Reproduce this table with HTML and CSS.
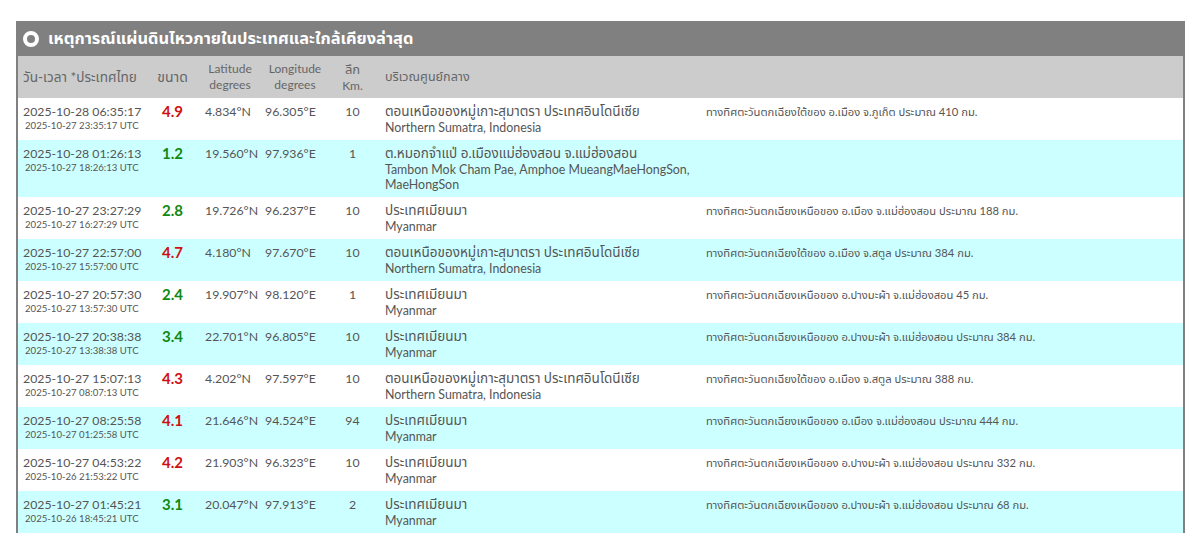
FILE: index.html
```html
<!DOCTYPE html>
<html lang="th">
<head>
<meta charset="utf-8">
<title>เหตุการณ์แผ่นดินไหว</title>
<link rel="stylesheet" href="styles.css">
</head>
<body>
<div class="page">
  <div class="panel">
    <div class="title-bar">
      <span class="title-icon"></span>
      <span class="title-text">เหตุการณ์แผ่นดินไหวภายในประเทศและใกล้เคียงล่าสุด</span>
    </div>
    <table class="quakes">
      <colgroup>
        <col class="c-date"><col class="c-mag"><col class="c-lat"><col class="c-lon"><col class="c-depth"><col class="c-loc"><col class="c-desc">
      </colgroup>
      <thead>
        <tr>
          <th class="h-date">วัน-เวลา *ประเทศไทย</th>
          <th class="h-mag">ขนาด</th>
          <th class="h-lat">Latitude<br>degrees</th>
          <th class="h-lon">Longitude<br>degrees</th>
          <th class="h-depth"><span class="h-th">ลึก</span><br>Km.</th>
          <th class="h-loc">บริเวณศูนย์กลาง</th>
          <th class="h-desc"></th>
        </tr>
      </thead>
      <tbody>
        <tr>
          <td class="date">2025-10-28 06:35:17<span class="utc">2025-10-27 23:35:17 UTC</span></td>
          <td class="mag red">4.9</td>
          <td class="lat">4.834°N</td>
          <td class="lon">96.305°E</td>
          <td class="depth">10</td>
          <td class="loc"><span class="th-line">ตอนเหนือของหมู่เกาะสุมาตรา ประเทศอินโดนีเซีย</span><span class="en-line">Northern Sumatra, Indonesia</span></td>
          <td class="desc">ทางทิศตะวันตกเฉียงใต้ของ อ.เมือง จ.ภูเก็ต ประมาณ 410 กม.</td>
        </tr>
        <tr class="alt">
          <td class="date">2025-10-28 01:26:13<span class="utc">2025-10-27 18:26:13 UTC</span></td>
          <td class="mag green">1.2</td>
          <td class="lat">19.560°N</td>
          <td class="lon">97.936°E</td>
          <td class="depth">1</td>
          <td class="loc"><span class="th-line">ต.หมอกจำแป่ อ.เมืองแม่ฮ่องสอน จ.แม่ฮ่องสอน</span><span class="en-line">Tambon Mok Cham Pae, Amphoe MueangMaeHongSon,</span><span class="en-line">MaeHongSon</span></td>
          <td class="desc"></td>
        </tr>
        <tr>
          <td class="date">2025-10-27 23:27:29<span class="utc">2025-10-27 16:27:29 UTC</span></td>
          <td class="mag green">2.8</td>
          <td class="lat">19.726°N</td>
          <td class="lon">96.237°E</td>
          <td class="depth">10</td>
          <td class="loc"><span class="th-line">ประเทศเมียนมา</span><span class="en-line">Myanmar</span></td>
          <td class="desc">ทางทิศตะวันตกเฉียงเหนือของ อ.เมือง จ.แม่ฮ่องสอน ประมาณ 188 กม.</td>
        </tr>
        <tr class="alt">
          <td class="date">2025-10-27 22:57:00<span class="utc">2025-10-27 15:57:00 UTC</span></td>
          <td class="mag red">4.7</td>
          <td class="lat">4.180°N</td>
          <td class="lon">97.670°E</td>
          <td class="depth">10</td>
          <td class="loc"><span class="th-line">ตอนเหนือของหมู่เกาะสุมาตรา ประเทศอินโดนีเซีย</span><span class="en-line">Northern Sumatra, Indonesia</span></td>
          <td class="desc">ทางทิศตะวันตกเฉียงใต้ของ อ.เมือง จ.สตูล ประมาณ 384 กม.</td>
        </tr>
        <tr>
          <td class="date">2025-10-27 20:57:30<span class="utc">2025-10-27 13:57:30 UTC</span></td>
          <td class="mag green">2.4</td>
          <td class="lat">19.907°N</td>
          <td class="lon">98.120°E</td>
          <td class="depth">1</td>
          <td class="loc"><span class="th-line">ประเทศเมียนมา</span><span class="en-line">Myanmar</span></td>
          <td class="desc">ทางทิศตะวันตกเฉียงเหนือของ อ.ปางมะผ้า จ.แม่ฮ่องสอน 45 กม.</td>
        </tr>
        <tr class="alt">
          <td class="date">2025-10-27 20:38:38<span class="utc">2025-10-27 13:38:38 UTC</span></td>
          <td class="mag green">3.4</td>
          <td class="lat">22.701°N</td>
          <td class="lon">96.805°E</td>
          <td class="depth">10</td>
          <td class="loc"><span class="th-line">ประเทศเมียนมา</span><span class="en-line">Myanmar</span></td>
          <td class="desc">ทางทิศตะวันตกเฉียงเหนือของ อ.ปางมะผ้า จ.แม่ฮ่องสอน ประมาณ 384 กม.</td>
        </tr>
        <tr>
          <td class="date">2025-10-27 15:07:13<span class="utc">2025-10-27 08:07:13 UTC</span></td>
          <td class="mag red">4.3</td>
          <td class="lat">4.202°N</td>
          <td class="lon">97.597°E</td>
          <td class="depth">10</td>
          <td class="loc"><span class="th-line">ตอนเหนือของหมู่เกาะสุมาตรา ประเทศอินโดนีเซีย</span><span class="en-line">Northern Sumatra, Indonesia</span></td>
          <td class="desc">ทางทิศตะวันตกเฉียงใต้ของ อ.เมือง จ.สตูล ประมาณ 388 กม.</td>
        </tr>
        <tr class="alt">
          <td class="date">2025-10-27 08:25:58<span class="utc">2025-10-27 01:25:58 UTC</span></td>
          <td class="mag red">4.1</td>
          <td class="lat">21.646°N</td>
          <td class="lon">94.524°E</td>
          <td class="depth">94</td>
          <td class="loc"><span class="th-line">ประเทศเมียนมา</span><span class="en-line">Myanmar</span></td>
          <td class="desc">ทางทิศตะวันตกเฉียงเหนือของ อ.เมือง จ.แม่ฮ่องสอน ประมาณ 444 กม.</td>
        </tr>
        <tr>
          <td class="date">2025-10-27 04:53:22<span class="utc">2025-10-26 21:53:22 UTC</span></td>
          <td class="mag red">4.2</td>
          <td class="lat">21.903°N</td>
          <td class="lon">96.323°E</td>
          <td class="depth">10</td>
          <td class="loc"><span class="th-line">ประเทศเมียนมา</span><span class="en-line">Myanmar</span></td>
          <td class="desc">ทางทิศตะวันตกเฉียงเหนือของ อ.ปางมะผ้า จ.แม่ฮ่องสอน ประมาณ 332 กม.</td>
        </tr>
        <tr class="alt">
          <td class="date">2025-10-27 01:45:21<span class="utc">2025-10-26 18:45:21 UTC</span></td>
          <td class="mag green">3.1</td>
          <td class="lat">20.047°N</td>
          <td class="lon">97.913°E</td>
          <td class="depth">2</td>
          <td class="loc"><span class="th-line">ประเทศเมียนมา</span><span class="en-line">Myanmar</span></td>
          <td class="desc">ทางทิศตะวันตกเฉียงเหนือของ อ.ปางมะผ้า จ.แม่ฮ่องสอน ประมาณ 68 กม.</td>
        </tr>
      </tbody>
    </table>
  </div>
</div>
</body>
</html>
```
FILE: styles.css
```css
html, body {
  margin: 0;
  padding: 0;
  background: #ffffff;
}

body {
  font-family: "Lato", "Noto Sans", "Noto Sans Thai", sans-serif;
  color: #555555;
}

.page {
  padding: 21px 15px 0 16px;
}

.panel {
  border-left: 2px solid #808080;
  border-right: 2px solid #808080;
}

.title-bar {
  background: #808080;
  height: 35px;
  display: flex;
  align-items: center;
  margin: 0 -2px;
  padding-left: 7px;
  gap: 9px;
}

.title-icon {
  width: 8px;
  height: 8px;
  border-radius: 50%;
  background: #808080;
  border: 4px solid #ffffff;
  flex: none;
}

.title-text {
  color: #ffffff;
  font-weight: bold;
  font-size: 16.4px;
}

.quakes {
  width: 100%;
  border-collapse: collapse;
  table-layout: fixed;
}

.c-date { width: 132px; }
.c-mag { width: 45px; }
.c-lat { width: 65px; }
.c-lon { width: 70px; }
.c-depth { width: 45px; }
.c-loc { width: 325px; }

thead tr {
  background: #cccccc;
  height: 42px;
}

th {
  font-weight: normal;
  font-size: 12px;
  line-height: 16px;
  color: #666666;
  padding: 0 5px;
  text-align: center;
  vertical-align: middle;
}

th.h-date { text-align: left; padding-left: 5px; font-size: 13.6px; }
th.h-mag { font-size: 14px; }
th.h-lat { padding-left: 10px; }
th.h-depth .h-th { font-size: 13px; }
th.h-loc { text-align: left; padding-left: 10px; font-size: 12.6px; }

tbody tr { background: #ffffff; }
tbody tr.alt { background: #ccffff; }

td {
  vertical-align: top;
  padding: 5px 5px 5px;
  font-size: 12px;
  line-height: 16px;
}

td.date {
  font-size: 12.3px;
  line-height: 17px;
  white-space: nowrap;
}

.utc {
  display: block;
  font-size: 9.6px;
  line-height: 12px;
  padding-left: 2px;
}

td.mag {
  text-align: center;
  font-size: 15px;
  line-height: 17px;
  font-weight: bold;
}

.red { color: #d01010; }
.green { color: #118811; }

td.lat, td.lon, td.depth {
  font-size: 12.3px;
  line-height: 17px;
  white-space: nowrap;
}

td.lat { padding-left: 10px; }
td.depth { text-align: center; }

td.loc {
  padding-left: 10px;
  padding-right: 0;
  white-space: nowrap;
}

.th-line {
  display: block;
  font-size: 13.5px;
  line-height: 17px;
}

.en-line {
  display: block;
  font-size: 12.4px;
  line-height: 15px;
}

td.desc {
  padding-left: 6px;
  font-size: 11.2px;
  line-height: 17px;
}
```
